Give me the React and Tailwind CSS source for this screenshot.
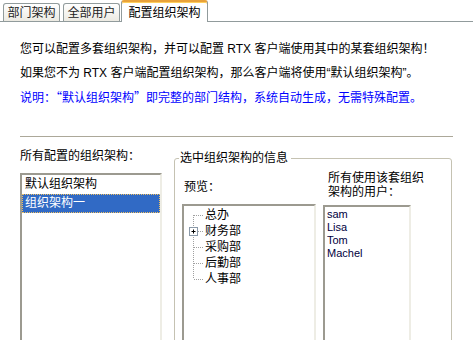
import React from "react";

const tabs = ["部门架构", "全部用户"];
const orgs = ["默认组织架构", "组织架构一"];
const depts = ["总办", "财务部", "采购部", "后勤部", "人事部"];
const users = ["sam", "Lisa", "Tom", "Machel"];

function TreeLine({ index, last, expandable }) {
	return (
		<svg width="20" height="16" className="shrink-0">
			<line
				x1="9.5"
				y1={index === 0 ? 8 : 0}
				x2="9.5"
				y2={last ? 8 : 16}
				stroke="#a0a0a0"
				strokeDasharray="1 1"
			/>
			<line x1="10" y1="8.5" x2="19" y2="8.5" stroke="#a0a0a0" strokeDasharray="1 1" />
			{expandable && (
				<>
					<rect x="5.5" y="4.5" width="8" height="8" fill="#fff" stroke="#8a99a8" />
					<line x1="7.5" y1="8.5" x2="11.5" y2="8.5" stroke="#000" />
					<line x1="9.5" y1="6.5" x2="9.5" y2="10.5" stroke="#000" />
				</>
			)}
		</svg>
	);
}

export default function App() {
	return (
		<div className="w-[473px] h-[340px] overflow-hidden bg-white text-[12px] text-black font-['Liberation_Sans','Noto_Sans_CJK_SC',sans-serif]">
			{/* Tabs */}
			<div className="flex items-end h-[22px] border-b border-[#919b9c]">
				{tabs.map((t) => (
					<div
						key={t}
						className="ml-[3px] w-[57px] h-[18px] flex items-center justify-center border border-b-0 border-[#919b9c] rounded-t-[3px] bg-gradient-to-b from-white to-[#eceae2] text-[#222] leading-none"
					>
						{t}
					</div>
				))}
				<div className="ml-[1px] w-[87px] h-[22px] -mb-px flex items-center justify-center border border-b-0 border-[#919b9c] border-t-2 border-t-[#e8a23a] rounded-t-[3px] bg-white shadow-[inset_0_1px_0_#ffcf5c] leading-none pt-[1px]">
					配置组织架构
				</div>
			</div>

			<div className="px-[20px]">
				{/* Intro text */}
				<div className="pt-[15px] leading-[24px]">
					<p>您可以配置多套组织架构，并可以配置 RTX 客户端使用其中的某套组织架构！</p>
					<p>如果您不为 RTX 客户端配置组织架构，那么客户端将使用“默认组织架构”。</p>
					<p className="text-[#0000ff]">
						说明：<span className="font-['Noto_Sans_CJK_SC',sans-serif]">“</span>默认组织架构
						<span className="font-['Noto_Sans_CJK_SC',sans-serif]">”</span>即完整的部门结构，系统自动生成，无需特殊配置。
					</p>
				</div>

				<div className="mt-[26px] h-px bg-[#aca899]" />

				<div className="flex items-start">
					{/* All configured orgs */}
					<div className="w-[142px] pt-[12px]">
						<p className="leading-[14px]">所有配置的组织架构：</p>
						<div className="mt-[10px] h-[200px] border-2 border-t-[#9c9a90] border-l-[#9c9a90] border-r-[#eeede5] border-b-[#eeede5]">
							{orgs.map((o, i) => (
								<div
									key={o}
									className={
										i === 1
											? "h-[19px] leading-[17px] pl-[2px] bg-[#316ac5] text-white border border-dotted border-[#f0c060]"
											: "h-[19px] leading-[17px] pl-[3px] pt-px"
									}
								>
									{o}
								</div>
							))}
						</div>
					</div>

					{/* Selected org info */}
					<fieldset className="ml-[12px] mt-[14px] w-[278px] h-[220px] border border-[#c5c2b2] rounded-[3px]">
						<legend className="ml-[4px] px-[1px] pr-[3px] leading-[14px]">选中组织架构的信息</legend>
						<div className="flex items-start pl-[7px]">
							<div className="w-[134px]">
								<p className="mt-[15px] pl-[2px] leading-[14px]">预览：</p>
								<div className="mt-[10px] h-[160px] border-2 border-t-[#9c9a90] border-l-[#9c9a90] border-r-[#eeede5] border-b-[#eeede5] pt-px">
									{depts.map((d, i) => (
										<div key={d} className="flex items-center h-[16px] leading-[16px]">
											<TreeLine index={i} last={i === depts.length - 1} expandable={i === 1} />
											<span className="ml-px">{d}</span>
										</div>
									))}
								</div>
							</div>

							<div className="ml-[7px]">
								<p className="mt-[6px] pl-[5px] leading-[14px] whitespace-nowrap">
									所有使用该套组织
									<br />
									架构的用户：
								</p>
								<div className="mt-[6px] w-[88px] h-[160px] border-2 border-t-[#9c9a90] border-l-[#9c9a90] border-r-[#eeede5] border-b-[#eeede5] pt-px text-[11px] leading-[13px] text-[#000040]">
									{users.map((u) => (
										<div key={u} className="pl-[2px]">
											{u}
										</div>
									))}
								</div>
							</div>
						</div>
					</fieldset>
				</div>
			</div>
		</div>
	);
}
